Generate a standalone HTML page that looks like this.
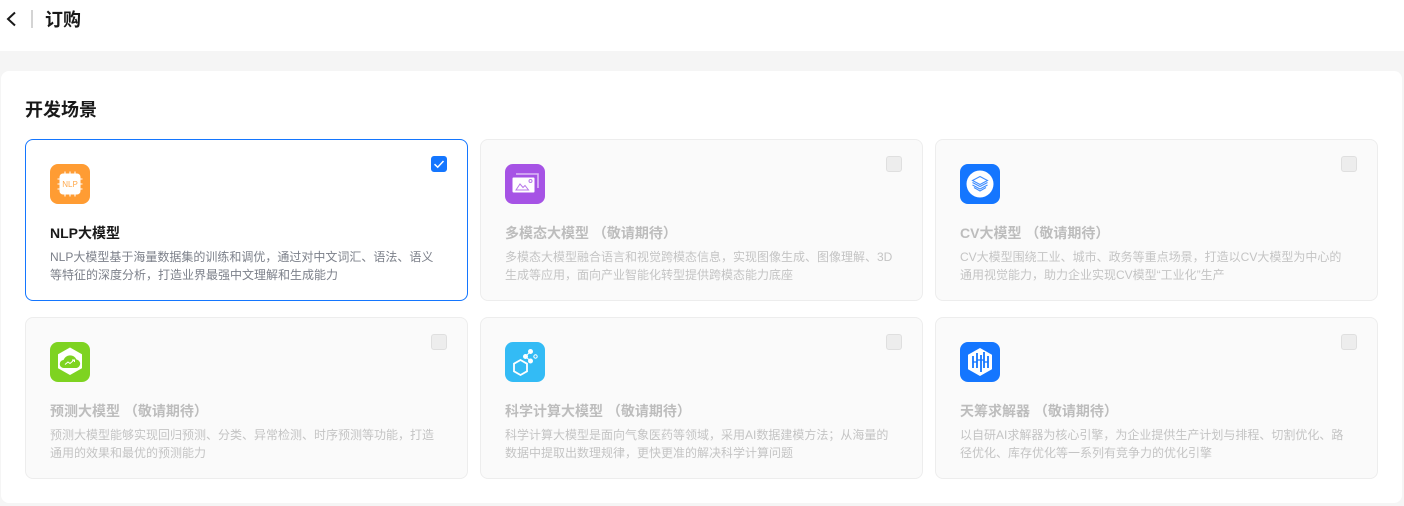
<!DOCTYPE html>
<html lang="zh"><head><meta charset="utf-8"><style>
*{box-sizing:border-box}
html,body{margin:0;width:1404px;height:506px;overflow:hidden;background:#f5f5f5;font-family:"Liberation Sans","Noto Sans CJK SC",sans-serif}
.top{position:absolute;left:0;top:0;width:1404px;height:51px;background:#fff}
.back{position:absolute;left:5px;top:11px}
.sep{position:absolute;left:31px;top:10px;width:2px;height:18px;background:#d4d4d4}
.pt{position:absolute;left:45px;top:8px;font-size:18px;line-height:24px;font-weight:700;color:#191919}
.panel{position:absolute;left:1px;top:71px;width:1401px;height:432px;background:#fff;border-radius:8px}
h2{position:absolute;left:25px;top:98px;margin:0;font-size:18px;line-height:24px;font-weight:700;color:#191919}
.card{position:absolute;width:443px;height:162px;border:1px solid #ededed;border-radius:8px;background:#fafafa}
.card.on{background:#fff;border-color:#1476ff}
.ico{position:absolute;left:24px;top:24px;width:40px;height:40px;border-radius:8px}
.ico svg{display:block}
.t{position:absolute;left:24px;top:83px;font-size:14px;line-height:20px;font-weight:700;color:#bdbdbd;white-space:nowrap}
.on .t{color:#191919}
.d{position:absolute;left:24px;top:108px;width:396px;font-size:12px;line-height:18px;color:#c4c4c4;white-space:nowrap}
.on .d{color:#7c808a}
.cb{position:absolute;right:20px;top:16px;width:16px;height:16px;border-radius:3px;background:#ededed;border:1px solid #dfdfdf}
.on .cb{background:#1476ff;border-color:#1476ff}
</style></head><body>
<div class="top"></div>
<svg class="back" width="12" height="18" viewBox="0 0 12 18"><path d="M10 1.500L3 8l7 6.500" fill="none" stroke="#191919" stroke-width="2"/></svg>
<div class="sep"></div><div class="pt">订购</div>
<div class="panel"></div>
<h2>开发场景</h2>

<div class="card on" style="left:25px;top:139px">
<div class="ico" style="background:#ff9c33"><svg width="40" height="40" viewBox="0 0 40 40"><g stroke="#fff" stroke-width="1.100"><path d="M7.500 15h3M7.500 20h3M7.500 25h3M29.500 15h3M29.500 20h3M29.500 25h3M15 7.500v3M20 7.500v3M25 7.500v3M15 29.500v3M20 29.500v3M25 29.500v3"/></g><rect x="9.500" y="9.500" width="21" height="21" rx="3.500" fill="#fff"/><text x="20" y="22.800" font-size="8" text-anchor="middle" fill="#ffa94d" font-family="Liberation Sans">NLP</text></svg></div>
<div class="t">NLP大模型</div>
<div class="d">NLP大模型基于海量数据集的训练和调优，通过对中文词汇、语法、语义<br>等特征的深度分析，打造业界最强中文理解和生成能力</div>
<div class="cb"><svg width="14" height="14" viewBox="0 0 14 14" style="display:block"><path d="M2.500 7.200l3.200 3L11.500 4" fill="none" stroke="#fff" stroke-width="1.500"/></svg></div>
</div>

<div class="card" style="left:480px;top:139px">
<div class="ico" style="background:#a653e5"><svg width="40" height="40" viewBox="0 0 40 40"><path d="M11 10h22v14" fill="none" stroke="#dcbcf5" stroke-width="1.600"/><rect x="7.500" y="13.500" width="22" height="15" rx="1" fill="#fff"/><path d="M11 26l4-6 3 3.500 2-2 3.500 4.500z" fill="none" stroke="#b878ea" stroke-width="1"/><circle cx="25.500" cy="17" r="1.500" fill="none" stroke="#b878ea"/></svg></div>
<div class="t">多模态大模型 （敬请期待）</div>
<div class="d">多模态大模型融合语言和视觉跨模态信息，实现图像生成、图像理解、3D<br>生成等应用，面向产业智能化转型提供跨模态能力底座</div>
<div class="cb"></div>
</div>

<div class="card" style="left:935px;top:139px">
<div class="ico" style="background:#1476ff"><svg width="40" height="40" viewBox="0 0 40 40"><circle cx="20" cy="20" r="13.500" fill="#fff"/><g fill="none" stroke="#3f8dff" stroke-width="1.100"><path d="M20 12.500l7.500 4-7.500 4-7.500-4z"/><path d="M12.500 18.500l7.500 4 7.500-4"/><path d="M12.500 21l7.500 4 7.500-4"/><path d="M14 23.500l6 3.500 6-3.500"/></g></svg></div>
<div class="t">CV大模型 （敬请期待）</div>
<div class="d">CV大模型围绕工业、城市、政务等重点场景，打造以CV大模型为中心的<br>通用视觉能力，助力企业实现CV模型“工业化”生产</div>
<div class="cb"></div>
</div>

<div class="card" style="left:25px;top:317px">
<div class="ico" style="background:#7ed321"><svg width="40" height="40" viewBox="0 0 40 40"><path d="M20 6l11.500 6.500v13.500L20 32.500 8.500 26V12.500z" fill="#fff" stroke="#fff" stroke-width="1" stroke-linejoin="round"/><path d="M14 26a4 4 0 0 1-.500-8 7 7 0 0 1 13-.500 4.300 4.300 0 0 1 0 8.500z" fill="#7ed321"/><path d="M15 22.500l3-2.500 2 1.500 4-3.500m-2 0h2.500v2" fill="none" stroke="#fff" stroke-width="1"/></svg></div>
<div class="t">预测大模型 （敬请期待）</div>
<div class="d">预测大模型能够实现回归预测、分类、异常检测、时序预测等功能，打造<br>通用的效果和最优的预测能力</div>
<div class="cb"></div>
</div>

<div class="card" style="left:480px;top:317px">
<div class="ico" style="background:#33bbf5"><svg width="40" height="40" viewBox="0 0 40 40"><path d="M15.500 18l6.500 3.700v7.600L15.500 33 9 29.300v-7.600z" fill="none" stroke="#fff" stroke-width="1.800"/><circle cx="20.500" cy="14.500" r="2.500" fill="#fff"/><circle cx="25.500" cy="9.500" r="2.500" fill="#fff"/><circle cx="25.500" cy="19" r="2.500" fill="#fff"/><circle cx="30.500" cy="14.500" r="1.700" fill="none" stroke="#fff"/><path d="M20.500 14.500l5-5M20.500 14.500l5 4.500" stroke="#fff"/></svg></div>
<div class="t">科学计算大模型 （敬请期待）</div>
<div class="d">科学计算大模型是面向气象医药等领域，采用AI数据建模方法；从海量的<br>数据中提取出数理规律，更快更准的解决科学计算问题</div>
<div class="cb"></div>
</div>

<div class="card" style="left:935px;top:317px">
<div class="ico" style="background:#1476ff"><svg width="40" height="40" viewBox="0 0 40 40"><path d="M20 6.500l11.500 6.500v14L20 33.500 8.500 27V13z" fill="#fff" stroke="#fff" stroke-linejoin="round"/><g stroke="#1476ff" stroke-width="1.800" fill="none"><path d="M13 14v12M17 11v15M21 13v17M24 10v16M28 14v12"/><path d="M13 20h4M24 20h4M17 18h7" stroke-width="1.200"/></g></svg></div>
<div class="t">天筹求解器 （敬请期待）</div>
<div class="d">以自研AI求解器为核心引擎，为企业提供生产计划与排程、切割优化、路<br>径优化、库存优化等一系列有竞争力的优化引擎</div>
<div class="cb"></div>
</div>
</body></html>
